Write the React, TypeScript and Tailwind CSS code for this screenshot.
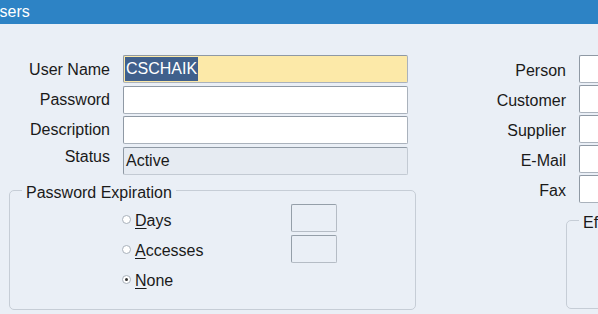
const fieldBox =
  "h-[28px] border border-[#aab2bc] border-t-[#8f99a4] border-l-[#8f99a4] rounded-[2px]";

function Radio({ checked = false }: { checked?: boolean }) {
  return (
    <span className="w-[9px] h-[9px] rounded-full border border-[#a9b1bb] bg-white flex items-center justify-center -mt-[3px]">
      {checked && <span className="w-[3px] h-[3px] rounded-full bg-[#333]" />}
    </span>
  );
}

function RadioRow({ label, rest, checked }: { label: string; rest: string; checked?: boolean }) {
  return (
    <div className="h-[30px] flex items-center gap-[4px]">
      <Radio checked={checked} />
      <span>
        <span className="underline underline-offset-2">{label}</span>
        {rest}
      </span>
    </div>
  );
}

export default function App() {
  const rightLabels = ["Person", "Customer", "Supplier", "E-Mail", "Fax"];

  return (
    <div
      className="w-[598px] h-[314px] overflow-hidden bg-[#eaeff6] text-[16px] text-[#1a1a1a]"
      style={{ fontFamily: '"Liberation Sans", Arial, sans-serif' }}
    >
      <div className="h-[24px] bg-[#2d83c5] text-white flex items-center">
        <span className="-ml-[12px]">Users</span>
      </div>

      <div className="flex pt-[31px]">
        {/* left column */}
        <div className="w-[420px] shrink-0">
          <div className="grid grid-cols-[110px_285px] gap-x-[13px] gap-y-[2.5px] items-center">
            <span className="text-right pt-[2px]">User Name</span>
            <div className={`${fieldBox} bg-[#fce9a8] flex items-stretch p-[1px]`}>
              <span className="bg-[#40608c] text-white px-[1px] flex items-center">CSCHAIK</span>
            </div>
            <span className="text-right pt-[1px]">Password</span>
            <div className={`${fieldBox} bg-white`} />
            <span className="text-right">Description</span>
            <div className={`${fieldBox} bg-white`} />
            <span className="text-right -mt-[7px]">Status</span>
            <div className={`${fieldBox} bg-[#e6ebf2] flex items-center px-[2px] border-[#c3cad3]`}>
              Active
            </div>
          </div>

          <fieldset className="ml-[9px] mt-[7px] w-[407px] h-[128px] border border-[#c6cdd6] rounded-[5px]">
            <legend className="ml-[12px] px-[4px] leading-[18px]">
              <span className="relative top-[2px]">Password Expiration</span>
            </legend>
            <div className="flex pt-[6px]">
              <div className="ml-[112px] w-[169px]">
                <RadioRow label="D" rest="ays" />
                <RadioRow label="A" rest="ccesses" />
                <RadioRow label="N" rest="one" checked />
              </div>
              <div className="flex flex-col gap-[3px] -mt-[2px]">
                <div className="w-[46px] h-[28px] border border-[#b5bcc5] border-t-[#959fa9] border-l-[#959fa9] rounded-[2px]" />
                <div className="w-[46px] h-[28px] border border-[#b5bcc5] border-t-[#959fa9] border-l-[#959fa9] rounded-[2px]" />
              </div>
            </div>
          </fieldset>
        </div>

        {/* right column */}
        <div className="flex-1">
          <div className="grid grid-cols-[146px_60px] gap-x-[13px] gap-y-[2px] items-center">
            {rightLabels.map((l) => (
              <div key={l} className="contents">
                <span className="text-right pt-[3px]">{l}</span>
                <div className={`${fieldBox} bg-white`} />
              </div>
            ))}
          </div>
          <fieldset className="ml-[146px] mt-[8px] w-[220px] h-[98px] border border-[#c6cdd6] rounded-[5px]">
            <legend className="ml-[12px] px-[4px] leading-[18px] whitespace-nowrap">
              <span className="relative top-[3px]">Effective Dates</span>
            </legend>
          </fieldset>
        </div>
      </div>
    </div>
  );
}
